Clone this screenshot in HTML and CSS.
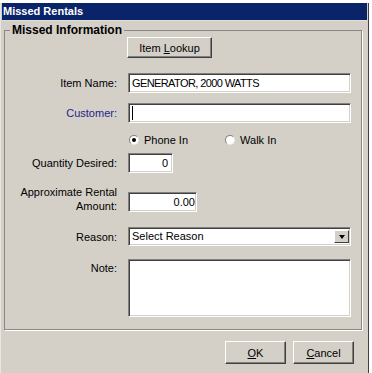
FILE: index.html
```html
<!DOCTYPE html>
<html>
<head>
<meta charset="utf-8">
<link rel="stylesheet" href="styles.css">
</head>
<body>
<div class="window">
  <div class="titlebar">Missed Rentals</div>
  <fieldset class="group">
    <legend class="legend">Missed Information</legend>
    <div class="form">
      <div class="label"></div>
      <div class="cell"><button class="btn lookup">Item <u>L</u>ookup</button></div>

      <div class="label r-item">Item Name:</div>
      <div class="cell r-item"><div class="field wide caps">GENERATOR, 2000 WATTS</div></div>

      <div class="label blue r-cust">Customer:</div>
      <div class="cell r-cust"><div class="field wide"><span class="caret"></span></div></div>

      <div class="label r-radio"></div>
      <div class="cell r-radio radios">
        <span class="radio-item"><span class="radio checked"></span>Phone In</span>
        <span class="radio-item"><span class="radio"></span>Walk In</span>
      </div>

      <div class="label r-qty">Quantity Desired:</div>
      <div class="cell r-qty"><div class="field num qty">0</div></div>

      <div class="label r-amt two">Approximate Rental<br>Amount:</div>
      <div class="cell r-amt end"><div class="field num amt">0.00</div></div>

      <div class="label r-reason">Reason:</div>
      <div class="cell r-reason"><div class="field wide select"><span>Select Reason</span><span class="dd"><span class="tri"></span></span></div></div>

      <div class="label note-label">Note:</div>
      <div class="cell r-note"><div class="field wide note"></div></div>
    </div>
  </fieldset>
  <div class="actions">
    <button class="btn action"><u>O</u>K</button>
    <button class="btn action"><u>C</u>ancel</button>
  </div>
</div>
</body>
</html>
```

FILE: styles.css
```css
html, body {
  margin: 0;
  padding: 0;
  background: #ffffff;
  font-family: "Liberation Sans", Arial, sans-serif;
  font-size: 11px;
  color: #000;
}
.window {
  margin-top: 3px;
  width: 369px;
  height: 370px;
  box-sizing: border-box;
  background: #d4d0c8;
  border-left: 1px solid #e8e6e0;
  border-right: 1px solid #404040;
  padding: 0 1px 0 1px;
  display: flex;
  flex-direction: column;
}
.titlebar {
  height: 17px;
  line-height: 17px;
  background: #0a246a;
  color: #fff;
  font-weight: bold;
  padding-left: 1px;
  border-bottom: 1px solid #e0ded8;
}
.group {
  margin: 2px 5px 0 2px;
  padding: 0 0 12px 0;
  border: 1px solid #8a8884;
  box-shadow: 1px 1px 0 #fff;
  min-width: 0;
}
.legend {
  font-weight: bold;
  font-size: 12px;
  line-height: 14px;
  padding: 0 2px;
  margin-left: 5px;
}
.form {
  display: grid;
  grid-template-columns: 112px 223px;
  column-gap: 11px;
  align-items: center;
}
.label {
  text-align: right;
  white-space: nowrap;
}
.label.blue { color: #24248a; }
.label.two { line-height: 14px; align-self: end; margin-bottom: -1px; }
.note-label { align-self: start; margin-top: 16px; }
.cell.end { align-self: end; }
.r-item { margin-top: 15px; }
.r-cust { margin-top: 10px; }
.r-radio { margin-top: 10px; }
.r-qty { margin-top: 6px; }
.r-amt { margin-top: 12px; }
.r-reason { margin-top: 15px; }
.r-note { margin-top: 13px; }

.btn {
  font-family: "Liberation Sans", Arial, sans-serif;
  font-size: 11px;
  color: #000;
  background: #d4d0c8;
  border: 1px solid;
  border-color: #ffffff #404040 #404040 #ffffff;
  box-shadow: inset -1px -1px #808080;
  padding: 0;
  margin: 0;
}
.lookup {
  width: 85px;
  height: 21px;
  margin-left: -1px;
  display: block;
}
.field {
  background: #fff;
  box-sizing: border-box;
  border: 1px solid;
  border-color: #808080 #fff #fff #808080;
  box-shadow: inset 1px 1px #404040, inset -1px -1px #d4d0c8;
  height: 20px;
  line-height: 18px;
  padding: 0 3px;
  white-space: nowrap;
  overflow: hidden;
}
.wide { width: 223px; }
.caps { letter-spacing: -0.6px; }
.caret {
  display: inline-block;
  width: 1px;
  height: 14px;
  background: #000;
  vertical-align: middle;
  margin-top: -2px;
}
.num { text-align: right; }
.qty { width: 45px; padding-right: 4px; }
.amt { width: 69px; padding-right: 1px; }
.select {
  height: 19px;
  line-height: 17px;
  display: flex;
  justify-content: space-between;
  align-items: center;
  padding-right: 1px;
}
.dd {
  width: 15px;
  height: 13px;
  box-sizing: border-box;
  background: #d4d0c8;
  border: 1px solid;
  border-color: #fff #404040 #404040 #fff;
  display: flex;
  align-items: center;
  justify-content: center;
}
.tri {
  width: 0;
  height: 0;
  border-left: 3px solid transparent;
  border-right: 3px solid transparent;
  border-top: 4px solid #000;
}
.note { height: 58px; }
.radios {
  display: flex;
  height: 14px;
  align-items: center;
}
.radio-item {
  display: inline-flex;
  align-items: center;
  gap: 5px;
  margin-left: 1px;
}
.radio-item + .radio-item { margin-left: 37px; }
.radio {
  width: 10px;
  height: 10px;
  box-sizing: border-box;
  border-radius: 50%;
  background: #fff;
  border: 1px solid;
  border-color: #808080 #e8e8e8 #e8e8e8 #808080;
  position: relative;
}
.radio.checked::after {
  content: "";
  position: absolute;
  left: 2px;
  top: 2px;
  width: 4px;
  height: 4px;
  border-radius: 50%;
  background: #000;
}
.actions {
  display: flex;
  justify-content: flex-end;
  gap: 7px;
  padding: 11px 13px 0 0;
}
.action {
  width: 61px;
  height: 23px;
}
u { text-decoration: underline; }
```
